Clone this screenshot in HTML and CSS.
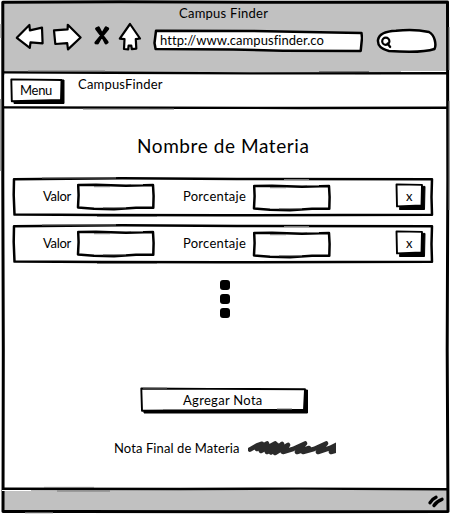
FILE: index.html
```html
<!DOCTYPE html>
<html lang="es">
<head>
<meta charset="utf-8">
<title>Campus Finder</title>
<link rel="stylesheet" href="styles.css">
</head>
<body>
<svg class="defs" width="0" height="0" aria-hidden="true">
  <symbol id="row-box" viewBox="0 0 422 40">
    <path class="box" d="M2 2.2L110 1.3L225 2L420 2.2L419.5 20L420 37.8L210 38.3L90 38L2.5 37.6L1.7 18Z"/>
    <path class="grain" d="M30 .9H104M272 2.5H297M85 39.5H145"/>
  </symbol>
  <symbol id="field" viewBox="0 0 80 28">
    <path class="box" d="M2.2 2L20 1.8L50 2.7L77 2L77.6 13L77.3 24.8L60 24.8L38 26.2L18 25.7L2 24.4L2.6 12Z"/>
    <path class="grain" d="M18 3.7H34M55 1.5H67M27 24.7H50"/>
  </symbol>
  <symbol id="small-button" viewBox="0 0 32 29">
    <path class="shadow" d="M5 22.5L26 23V3.4H30L29.5 26.5H4.5Z"/>
    <path class="box" d="M1.5 1.4L27 1.9L26.5 22.4L2 23.4Z"/>
  </symbol>
</svg>
<div class="browser">
  <svg class="back" viewBox="0 0 450 514">
    <path fill="#c1c1c1" d="M3 2H447V72H3ZM3 490H447V511H3Z"/>
    <path class="frame" d="M2.8 2.3L120 1.8L300 2.3L447.5 1.9L447.8 180L447.2 350L448 511.5L230 511.8L80 511.5L3 511.4L3.3 350L2.8 180Z"/>
    <path class="rule" d="M3 72.4L110 72.8L250 73.4L448 73.3M4 107.4L160 107.7L300 108L447 107.8M3 488.7L180 489L300 488.6L447 489.2"/>
    <path class="grain" d="M1 24V38M.8 99V171M449 27V70M449 101V210M28 71H105M319 71.5H369M355 74.5H381M83 109H174M44 487.4H94M57 491H110M25 512.8H53"/>
    <path fill="none" stroke="#fff" d="M5 75V106M401 71.5H446M2 490.5H31"/>
  </svg>
  <div class="page">
    <header class="chrome">
      <div class="window-title"><span class="t-window">Campus Finder</span></div>
      <div class="toolbar">
        <svg class="nav" width="130" height="36" viewBox="13 20 130 36">
          <g class="icon">
            <path d="M16.8 37.8L29.4 25L29.9 30.4L42 27.6L42.6 43.4L30.5 42.4L29.8 47.8Z"/>
            <path d="M80.6 37.5L67.8 24.8L67.6 29.4L54 30.4L55.3 44L67.2 43.2L68 49.4Z"/>
            <path d="M130 24L140 38.5L135.8 39.2L136.3 48.6L131.8 49.2L131.3 45.6L128.6 45.7L128.2 49.3L124 49L124.5 39.2L119.8 38.6Z"/>
          </g>
          <path class="close" d="M96.7 28.8L107 42.3M107.6 28.8L96 42.8M98.4 28L106 42.8M106 28L97.5 42.7"/>
        </svg>
        <div class="url sketch">
          <svg class="back" viewBox="0 0 210 24"><path class="box" d="M3 1.8L100 2L180 3.4L208.5 4L209 9L207.7 22L130 21.7L80 20.5L2.6 20L1.5 14Z"/></svg>
          <span class="t-url">http://www.campusfinder.co</span>
        </div>
        <svg class="search" width="62" height="28" viewBox="377 28 62 28">
          <path class="box" d="M379 40C380 34 387 31.2 397 30.8C410 29.2 421 30 430 32C436 35 437.5 45 435.5 49C425 52.5 405 52 390 51C382 49 378.5 46 379 40Z"/>
          <circle class="lens" cx="386.8" cy="41.3" r="3.6"/><path class="lens" d="M388.5 43.5L391.2 47"/>
        </svg>
      </div>
    </header>
    <nav class="menubar">
      <div class="menu sketch">
        <svg class="back" viewBox="0 0 56 28"><path class="shadow" d="M4 22L50 22V2H54V25.5H4Z"/><path class="box" d="M1.3 1.4L51.5 2L51 22L1.8 23.2Z"/></svg>
        <span class="t-menu">Menu</span>
      </div>
      <span class="t-brand">CampusFinder</span>
    </nav>
    <main>
      <h1><span class="t-title">Nombre de Materia</span></h1>
      <section class="rows">
        <div class="row sketch">
          <svg class="back"><use href="#row-box"/></svg>
          <div class="cells">
            <span class="label t-valor">Valor</span>
            <svg class="field"><use href="#field"/></svg>
            <span class="label t-porcentaje">Porcentaje</span>
            <svg class="field second"><use href="#field"/></svg>
            <div class="remove sketch"><svg class="back"><use href="#small-button"/></svg><span class="t-x">x</span></div>
          </div>
        </div>
        <div class="row sketch">
          <svg class="back"><use href="#row-box"/></svg>
          <div class="cells">
            <span class="label t-valor">Valor</span>
            <svg class="field"><use href="#field"/></svg>
            <span class="label t-porcentaje">Porcentaje</span>
            <svg class="field second"><use href="#field"/></svg>
            <div class="remove sketch"><svg class="back"><use href="#small-button"/></svg><span class="t-x">x</span></div>
          </div>
        </div>
      </section>
      <div class="dots"><i></i><i></i><i></i></div>
      <div class="add sketch">
        <svg class="back" viewBox="0 0 170 28"><path class="shadow" d="M4 22H164V3H167.5V26H4Z"/><path class="box" d="M1.3 1.5L70 1.9L165 2.2L164 22.6L2 23.7Z"/><path class="grain" d="M3 1H27M23 22.5H62M137 22H152"/></svg>
        <span class="t-add">Agregar Nota</span>
      </div>
      <div class="final">
        <span class="t-final">Nota Final de Materia</span>
        <svg width="88" height="18" viewBox="248 440 88 18"><path class="scribble" d="M250 450.5L257 446.5L262 444.8L257 450L267 444.5L261 452L275 444.5L267 453L277 446L271 453.5L282 445L275 454L288 446L283 453L293 450L305 444.5L297 453L309 449L303 453L314 450L326 444.5L318 453L330 449L338 445L331 453L338 451"/></svg>
      </div>
    </main>
    <footer><svg width="18" height="14" viewBox="427 494 18 14"><path class="grip" d="M430 502.8Q432 499 436 497.3M434 505.5Q437 501 442 499.3"/></svg></footer>
  </div>
</div>
</body>
</html>
```
FILE: styles.css
```css
* { box-sizing: border-box; }
body {
  margin: 0;
  background: #fff;
  color: #000;
  font-family: Lato, "Liberation Sans", sans-serif;
  font-size: 13px;
  line-height: 16px;
}
.defs { position: absolute; }
svg { display: block; flex: none; }
span { white-space: nowrap; }
.browser { display: grid; width: 450px; height: 514px; overflow: hidden; }
.back, .page { grid-area: 1 / 1; width: 100%; height: 100%; }
.page { display: flex; flex-direction: column; min-width: 0; z-index: 1; }
.sketch { display: grid; flex: none; }
.sketch > :not(.back) { grid-area: 1 / 1; z-index: 1; }

.box { fill: #fff; stroke: #000; stroke-width: 2.5; stroke-linejoin: round; }
.menu .box, .add .box, #small-button .box { stroke-width: 1.9; }
.shadow { fill: #000; stroke: #000; stroke-width: 1; stroke-linejoin: round; }
.grain { fill: none; stroke: #777; stroke-width: 1; }
.frame { fill: none; stroke: #000; stroke-width: 3; stroke-linejoin: round; }
.rule { fill: none; stroke: #000; stroke-width: 2.4; }
.icon { fill: #fff; stroke: #000; stroke-width: 2.2; stroke-linejoin: round; }
.close { fill: none; stroke: #000; stroke-width: 3.2; stroke-linecap: round; }
.lens { fill: none; stroke: #000; stroke-width: 2.2; stroke-linecap: round; }
.scribble { fill: none; stroke: #2b2b2b; stroke-width: 4.6; stroke-linecap: round; stroke-linejoin: round; }
.grip { fill: none; stroke: #000; stroke-width: 3.4; stroke-linecap: round; }

.chrome { height: 73px; padding-top: 5px; }
.window-title { padding-left: 179px; height: 15px; }
.toolbar { display: flex; padding-left: 13px; }
.url { width: 210px; height: 24px; margin: 9px 0 0 10px; }
.url > span { padding: 3px 0 0 7px; }
.search { margin: 8px 0 0 13px; }

.menubar { display: flex; height: 35px; padding: 5px 0 0 10px; gap: 13px; }
.menu { width: 56px; height: 28px; }
.menu > span { padding: 4px 0 0 10px; }

main { flex: 1; display: flex; flex-direction: column; }
h1 { margin: 26px 0 0 137px; height: 23px; font-size: 19px; line-height: 24px; font-weight: 400; }
.rows { display: grid; gap: 7px; padding: 20px 0 0 12px; }
.row { width: 422px; height: 40px; }
.cells { display: flex; align-items: flex-start; padding-left: 31px; }
.label { padding-top: 11px; }
.t-valor { width: 33px; }
.field { width: 80px; height: 28px; margin-top: 6px; }
.t-porcentaje { margin-left: 27px; width: 69px; }
.second { margin-top: 7px; }
.remove { width: 32px; height: 29px; margin: 6px 0 0 63px; }
.remove > span { padding: 5px 0 0 11px; }
.dots { display: grid; gap: 4px; padding: 16px 0 0 220px; }
.dots i { width: 10px; height: 10px; border-radius: 3px; background: #000; }
.add { width: 170px; height: 28px; margin: 69px 0 0 140px; }
.add > span { padding: 5px 0 0 43px; }
.final { display: flex; gap: 9px; margin: 24px 0 0 114px; }
footer { height: 25px; padding: 5px 0 0 427px; }

.t-window { letter-spacing: .25px; }
.t-brand { letter-spacing: .2px; margin: -2px 0 0 -1px; }
.t-url { letter-spacing: .05px; }
.t-menu { letter-spacing: -.3px; }
.t-title { letter-spacing: .58px; }
.t-valor { letter-spacing: -.3px; }
.t-porcentaje { letter-spacing: .25px; }
.t-add { letter-spacing: .3px; }
.t-final { letter-spacing: .1px; width: 125px; padding-top: 1px; }
```
